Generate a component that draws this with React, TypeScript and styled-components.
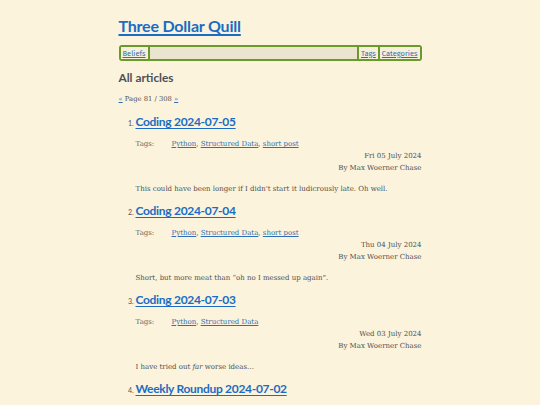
import React from "react";
import styled, { createGlobalStyle } from "styled-components";

const Global = createGlobalStyle`
  html, body { margin: 0; padding: 0; background: #fbf3dc; }
  body { font-family: "DejaVu Serif", serif; color: #4f4f4f; }
`;

const Page = styled.div`
  width: 303px;
  margin: 0 auto;
  padding-top: 14px;
`;

const SiteTitle = styled.h1`
  margin: 0;
  font-family: Lato, "Noto Sans", sans-serif;
  font-weight: 700;
  font-size: 16px;
  letter-spacing: -0.2px;
  line-height: 24px;
  a { color: #1a6cc4; text-decoration: underline; text-decoration-thickness: 1.5px; text-underline-offset: 2px; }
`;

const Nav = styled.nav`
  margin-top: 7px;
  display: flex;
  align-items: stretch;
  height: 12px;
  border: 2px solid #6b9a2c;
  border-radius: 3px;
  background: #ebe4ce;
  font-family: "Fira Sans", Lato, sans-serif;
  font-size: 7.5px;
`;

const NavItem = styled.a<{ $sep?: "left" | "right" }>`
  display: flex;
  align-items: center;
  padding: 0 2px;
  color: #2f6fb4;
  text-decoration: underline;
  background: #f6efd9;
  border-left: ${(p) => (p.$sep === "left" ? "2px solid #6b9a2c" : "none")};
  border-right: ${(p) => (p.$sep === "right" ? "2px solid #6b9a2c" : "none")};
`;

const NavFill = styled.div`
  flex: 1;
`;

const Heading = styled.h2`
  margin: 9px 0 0;
  font-family: Lato, "Noto Sans", sans-serif;
  font-weight: 700;
  font-size: 11.8px;
  line-height: 16px;
  color: #4b5057;
`;

const Pager = styled.p`
  margin: 8px 0 0;
  font-size: 6.8px;
  line-height: 10px;
  a { color: #2f6fb4; }
`;

const List = styled.ol`
  margin: 10px 0 0;
  padding-left: 17px;
  list-style: decimal;
  font-size: 7px;
`;

const Item = styled.li`
  &::marker { color: #555; font-family: Lato, sans-serif; font-size: 7px; }
`;

const ItemTitle = styled.h3`
  margin: 0;
  font-family: Lato, "Noto Sans", sans-serif;
  font-weight: 700;
  font-size: 12px;
  letter-spacing: -0.3px;
  line-height: 16px;
  a { color: #1a6cc4; text-decoration: underline; text-underline-offset: 2px; }
`;

const TagRow = styled.div`
  margin-top: 8px;
  display: flex;
  font-size: 7px;
  line-height: 12px;
`;

const TagLabel = styled.span`
  width: 36px;
  color: #666;
`;

const TagLink = styled.a`
  color: #2f6fb4;
  text-decoration: underline;
`;

const Meta = styled.div`
  text-align: right;
  font-size: 7px;
  line-height: 12px;
`;

const Excerpt = styled.p`
  margin: 9px 0 8px;
  font-size: 7px;
  line-height: 12px;
`;

type Post = { title: string; tags: string[]; date: string; excerpt: React.ReactNode };

const posts: Post[] = [
  {
    title: "Coding 2024-07-05",
    tags: ["Python", "Structured Data", "short post"],
    date: "Fri 05 July 2024",
    excerpt: "This could have been longer if I didn't start it ludicrously late. Oh well.",
  },
  {
    title: "Coding 2024-07-04",
    tags: ["Python", "Structured Data", "short post"],
    date: "Thu 04 July 2024",
    excerpt: "Short, but more meat than \u201coh no I messed up again\u201d.",
  },
  {
    title: "Coding 2024-07-03",
    tags: ["Python", "Structured Data"],
    date: "Wed 03 July 2024",
    excerpt: (
      <>
        I have tried out <em>far</em> worse ideas{"\u2026"}
      </>
    ),
  },
];

export default function App() {
  return (
    <Page>
      <Global />
      <SiteTitle>
        <a href="#">Three Dollar Quill</a>
      </SiteTitle>
      <Nav>
        <NavItem href="#" $sep="right">Beliefs</NavItem>
        <NavFill />
        <NavItem href="#" $sep="left">Tags</NavItem>
        <NavItem href="#" $sep="left">Categories</NavItem>
      </Nav>
      <Heading>All articles</Heading>
      <Pager>
        <a href="#">«</a> Page 81 / 308 <a href="#">»</a>
      </Pager>
      <List>
        {posts.map((p) => (
          <Item key={p.title}>
            <ItemTitle>
              <a href="#">{p.title}</a>
            </ItemTitle>
            <TagRow>
              <TagLabel>Tags:</TagLabel>
              <span>
                {p.tags.map((t, i) => (
                  <React.Fragment key={t}>
                    <TagLink href="#">{t}</TagLink>
                    {i < p.tags.length - 1 ? ", " : ""}
                  </React.Fragment>
                ))}
              </span>
            </TagRow>
            <Meta>{p.date}</Meta>
            <Meta>By Max Woerner Chase</Meta>
            <Excerpt>{p.excerpt}</Excerpt>
          </Item>
        ))}
        <Item>
          <ItemTitle>
            <a href="#">Weekly Roundup 2024-07-02</a>
          </ItemTitle>
        </Item>
      </List>
    </Page>
  );
}
